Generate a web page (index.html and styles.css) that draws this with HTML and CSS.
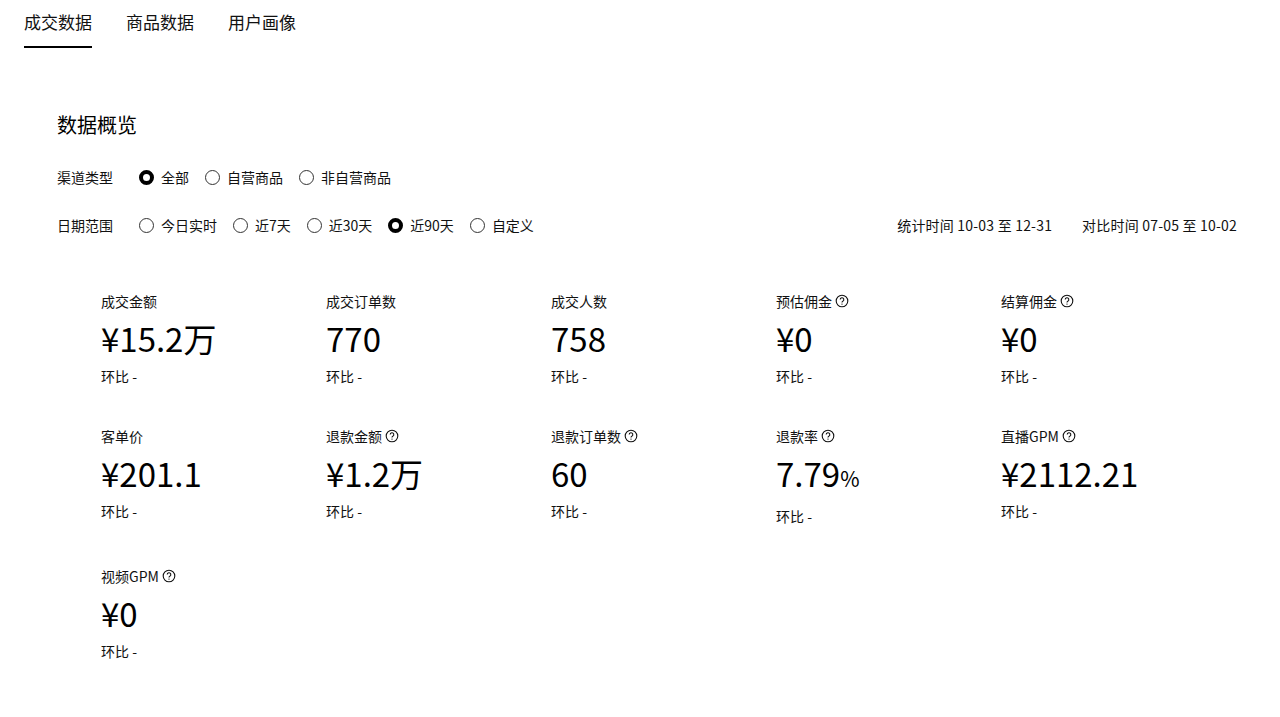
FILE: index.html
```html
<!DOCTYPE html>
<html lang="zh-CN">
<head>
<meta charset="utf-8">
<title>成交数据</title>
<link rel="stylesheet" href="styles.css">
</head>
<body>
<nav class="tabs">
  <div class="tab active">成交数据</div>
  <div class="tab">商品数据</div>
  <div class="tab">用户画像</div>
</nav>

<main class="overview">
  <h2 class="title">数据概览</h2>

  <div class="filter-row">
    <span class="filter-label">渠道类型</span>
    <div class="options">
      <label class="option"><span class="radio checked"></span>全部</label>
      <label class="option"><span class="radio"></span>自营商品</label>
      <label class="option"><span class="radio"></span>非自营商品</label>
    </div>
  </div>

  <div class="filter-row">
    <span class="filter-label">日期范围</span>
    <div class="options">
      <label class="option"><span class="radio"></span>今日实时</label>
      <label class="option"><span class="radio"></span>近7天</label>
      <label class="option"><span class="radio"></span>近30天</label>
      <label class="option"><span class="radio checked"></span>近90天</label>
      <label class="option"><span class="radio"></span>自定义</label>
    </div>
    <div class="period">统计时间 10-03 至 12-31<span class="sep"></span>对比时间 07-05 至 10-02</div>
  </div>

  <div class="metrics">
    <div class="metric">
      <div class="m-label">成交金额</div>
      <div class="m-value">¥15.2万</div>
      <div class="m-ratio">环比 -</div>
    </div>
    <div class="metric">
      <div class="m-label">成交订单数</div>
      <div class="m-value">770</div>
      <div class="m-ratio">环比 -</div>
    </div>
    <div class="metric">
      <div class="m-label">成交人数</div>
      <div class="m-value">758</div>
      <div class="m-ratio">环比 -</div>
    </div>
    <div class="metric">
      <div class="m-label">预估佣金<svg class="help" viewBox="0 0 14 14"><circle cx="7" cy="7" r="5.8"/><path d="M5.2 5.6a1.8 1.8 0 1 1 2.6 1.6c-.6.3-.8.6-.8 1.3"/><circle class="dot" cx="7" cy="10.1" r=".7"/></svg></div>
      <div class="m-value">¥0</div>
      <div class="m-ratio">环比 -</div>
    </div>
    <div class="metric">
      <div class="m-label">结算佣金<svg class="help" viewBox="0 0 14 14"><circle cx="7" cy="7" r="5.8"/><path d="M5.2 5.6a1.8 1.8 0 1 1 2.6 1.6c-.6.3-.8.6-.8 1.3"/><circle class="dot" cx="7" cy="10.1" r=".7"/></svg></div>
      <div class="m-value">¥0</div>
      <div class="m-ratio">环比 -</div>
    </div>

    <div class="metric">
      <div class="m-label">客单价</div>
      <div class="m-value">¥201.1</div>
      <div class="m-ratio">环比 -</div>
    </div>
    <div class="metric">
      <div class="m-label">退款金额<svg class="help" viewBox="0 0 14 14"><circle cx="7" cy="7" r="5.8"/><path d="M5.2 5.6a1.8 1.8 0 1 1 2.6 1.6c-.6.3-.8.6-.8 1.3"/><circle class="dot" cx="7" cy="10.1" r=".7"/></svg></div>
      <div class="m-value">¥1.2万</div>
      <div class="m-ratio">环比 -</div>
    </div>
    <div class="metric">
      <div class="m-label">退款订单数<svg class="help" viewBox="0 0 14 14"><circle cx="7" cy="7" r="5.8"/><path d="M5.2 5.6a1.8 1.8 0 1 1 2.6 1.6c-.6.3-.8.6-.8 1.3"/><circle class="dot" cx="7" cy="10.1" r=".7"/></svg></div>
      <div class="m-value">60</div>
      <div class="m-ratio">环比 -</div>
    </div>
    <div class="metric">
      <div class="m-label">退款率<svg class="help" viewBox="0 0 14 14"><circle cx="7" cy="7" r="5.8"/><path d="M5.2 5.6a1.8 1.8 0 1 1 2.6 1.6c-.6.3-.8.6-.8 1.3"/><circle class="dot" cx="7" cy="10.1" r=".7"/></svg></div>
      <div class="m-value with-unit">7.79<span class="unit">%</span></div>
      <div class="m-ratio">环比 -</div>
    </div>
    <div class="metric">
      <div class="m-label">直播GPM<svg class="help" viewBox="0 0 14 14"><circle cx="7" cy="7" r="5.8"/><path d="M5.2 5.6a1.8 1.8 0 1 1 2.6 1.6c-.6.3-.8.6-.8 1.3"/><circle class="dot" cx="7" cy="10.1" r=".7"/></svg></div>
      <div class="m-value">¥2112.21</div>
      <div class="m-ratio">环比 -</div>
    </div>

    <div class="metric">
      <div class="m-label">视频GPM<svg class="help" viewBox="0 0 14 14"><circle cx="7" cy="7" r="5.8"/><path d="M5.2 5.6a1.8 1.8 0 1 1 2.6 1.6c-.6.3-.8.6-.8 1.3"/><circle class="dot" cx="7" cy="10.1" r=".7"/></svg></div>
      <div class="m-value">¥0</div>
      <div class="m-ratio">环比 -</div>
    </div>
  </div>
</main>
</body>
</html>
```

FILE: styles.css
```css
* {
  box-sizing: border-box;
}

html, body {
  margin: 0;
  padding: 0;
  background: #ffffff;
}

body {
  font-family: "Noto Sans CJK SC", "Noto Sans", sans-serif;
  color: #111111;
  width: 1280px;
  height: 717px;
  overflow: hidden;
}

.tabs {
  display: flex;
  gap: 34px;
  padding-left: 24px;
  height: 48px;
}

.tab {
  font-size: 17px;
  line-height: 24px;
  padding-top: 10px;
  height: 48px;
  color: #111;
  border-bottom: 2px solid transparent;
}

.tab.active {
  border-bottom-color: #000;
}

.overview {
  padding: 0 43px 0 57px;
}

.title {
  margin: 63px 0 26px;
  font-size: 20px;
  line-height: 28px;
  font-weight: 400;
  color: #000;
}

.filter-row {
  display: flex;
  align-items: center;
  height: 24px;
  font-size: 14px;
  margin-bottom: 24px;
}

.filter-label {
  width: 82px;
  flex: none;
}

.options {
  display: flex;
  gap: 16px;
}

.option {
  display: flex;
  align-items: center;
  gap: 7px;
  line-height: 24px;
}

.radio {
  width: 15px;
  height: 15px;
  border: 1px solid #333;
  border-radius: 50%;
  background: #fff;
  flex: none;
}

.radio.checked {
  border: 4px solid #000;
}

.period {
  margin-left: auto;
  font-size: 14px;
  letter-spacing: 0.2px;
  white-space: nowrap;
}

.period .sep {
  display: inline-block;
  width: 30px;
}

.metrics {
  display: grid;
  grid-template-columns: repeat(5, 225px);
  row-gap: 40px;
  padding-left: 44px;
  margin-top: 54px;
}

.metric {
  display: flex;
  flex-direction: column;
}

.m-label {
  display: flex;
  align-items: center;
  font-size: 14px;
  line-height: 20px;
  height: 20px;
}

.help {
  width: 14px;
  height: 14px;
  margin-left: 3px;
  fill: none;
  stroke: #111;
  stroke-width: 1.1;
}

.help .dot {
  fill: #111;
  stroke: none;
}

.m-value {
  margin-top: 7px;
  font-size: 33px;
  line-height: 40px;
  height: 40px;
  color: #000;
  white-space: nowrap;
}

.m-value.with-unit {
  height: 45px;
}

.unit {
  font-size: 21px;
}

.m-ratio {
  margin-top: 8px;
  font-size: 14px;
  line-height: 20px;
}
```
